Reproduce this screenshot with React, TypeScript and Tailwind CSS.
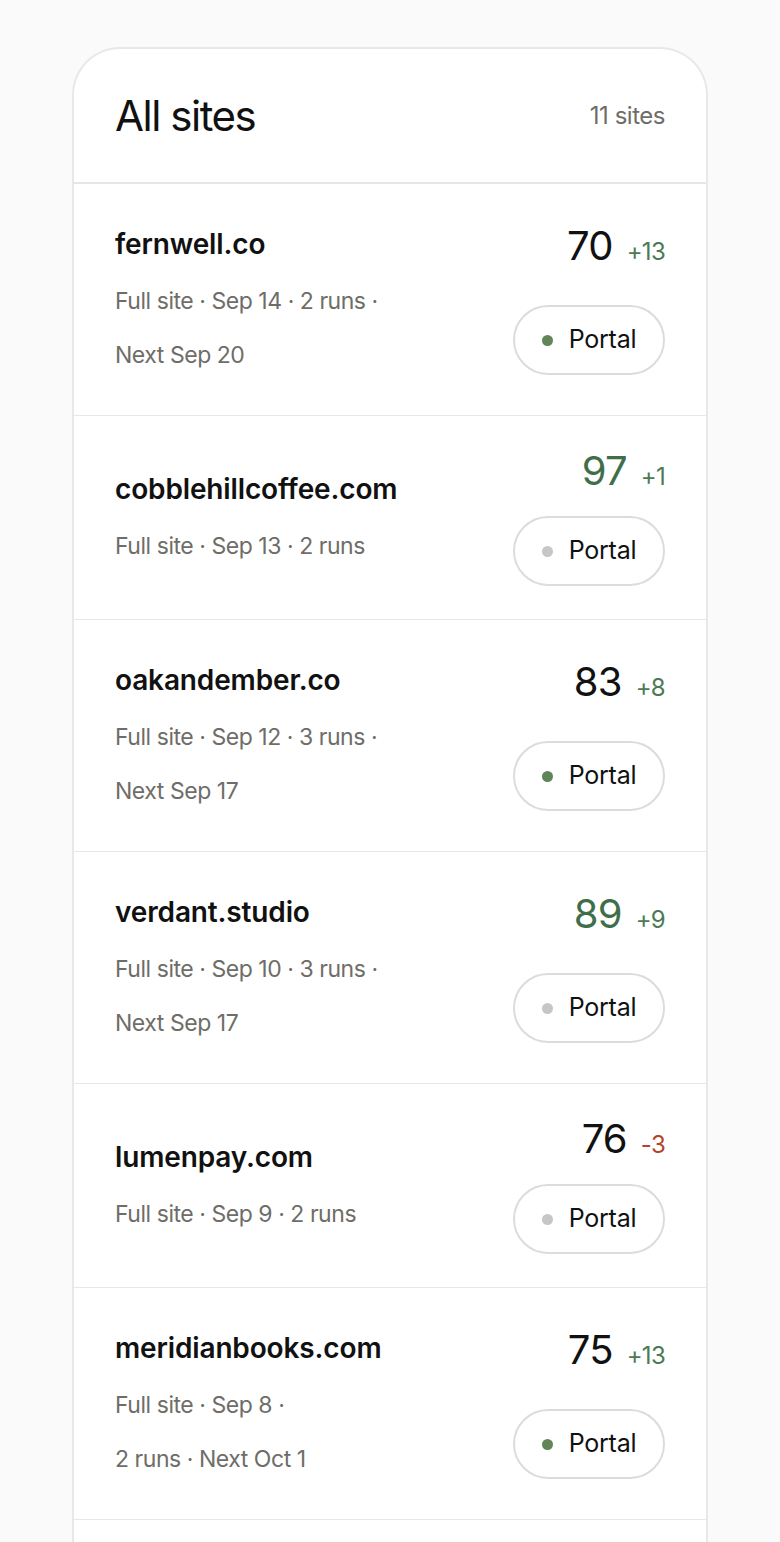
import React from "react";

type Site = {
  name: string;
  meta: string[];
  score: number;
  delta: number;
  high?: boolean;
  live?: boolean;
};

const sites: Site[] = [
  { name: "fernwell.co", meta: ["Full site · Sep 14 · 2 runs ·", "Next Sep 20"], score: 70, delta: 13, live: true },
  { name: "cobblehillcoffee.com", meta: ["Full site · Sep 13 · 2 runs"], score: 97, delta: 1, high: true },
  { name: "oakandember.co", meta: ["Full site · Sep 12 · 3 runs ·", "Next Sep 17"], score: 83, delta: 8, live: true },
  { name: "verdant.studio", meta: ["Full site · Sep 10 · 3 runs ·", "Next Sep 17"], score: 89, delta: 9, high: true },
  { name: "lumenpay.com", meta: ["Full site · Sep 9 · 2 runs"], score: 76, delta: -3 },
  { name: "meridianbooks.com", meta: ["Full site · Sep 8 ·", "2 runs · Next Oct 1"], score: 75, delta: 13, live: true },
  { name: "harborlane.shop", meta: ["Full site · Sep 6 · 1 run"], score: 68, delta: 4 },
  { name: "tidewater.io", meta: ["Full site · Sep 5 · 2 runs"], score: 81, delta: 2, live: true },
];

function SiteRow({ site }: { site: Site }) {
  const multi = site.meta.length > 1;
  return (
    <div className="flex items-center justify-between border-b border-[#e6e6e6] px-[41px] py-[33px]">
      <div className="flex flex-col pt-[4px]">
        <div className="text-[28px] font-semibold leading-[47px] tracking-[-0.005em] text-[#111111]">{site.name}</div>
        <div className="mt-[6px] text-[23px] leading-[54px] tracking-[-0.02em] text-[#6e6d68]">
          {site.meta.map((line, i) => (
            <div key={i}>{line}</div>
          ))}
        </div>
      </div>
      <div className={`flex flex-col items-end ${multi ? "gap-[37px]" : "gap-[23px]"}`}>
        <div className="flex h-[44px] items-baseline gap-[14px]">
          <span
            className={`text-[40px] leading-[44px] tracking-[-0.02em] ${site.high ? "text-[#3f6f4a]" : "text-[#111111]"}`}
          >
            {site.score}
          </span>
          <span
            className={`text-[24px] tracking-[-0.03em] ${site.delta < 0 ? "text-[#b4432c]" : "text-[#4b7a55]"}`}
          >
            {site.delta < 0 ? `-${Math.abs(site.delta)}` : `+${site.delta}`}
          </span>
        </div>
        <button className="flex h-[70px] w-[152px] items-center justify-center gap-[16px] rounded-full border-2 border-[#dcdcdc] bg-white">
          <span className={`h-[11px] w-[11px] rounded-full ${site.live ? "bg-[#5f8558]" : "bg-[#c6c6c6]"}`} />
          <span className="text-[25px] tracking-[-0.01em] text-[#111111]">Portal</span>
        </button>
      </div>
    </div>
  );
}

export default function App() {
  return (
    <div className="h-screen overflow-hidden bg-[#fafafa] pt-[47px] font-['Inter','Liberation_Sans',sans-serif]">
      <div className="mx-[72px] rounded-t-[48px] border-2 border-b-0 border-[#e8e8e8] bg-white">
        <div className="flex h-[135px] items-center justify-between border-b-2 border-[#e6e6e6] px-[41px]">
          <h1 className="text-[42px] tracking-[-0.035em] text-[#111111]">All sites</h1>
          <span className="text-[24px] tracking-[-0.02em] text-[#6e6d68]">11 sites</span>
        </div>
        {sites.map((s) => (
          <SiteRow key={s.name} site={s} />
        ))}
      </div>
    </div>
  );
}
